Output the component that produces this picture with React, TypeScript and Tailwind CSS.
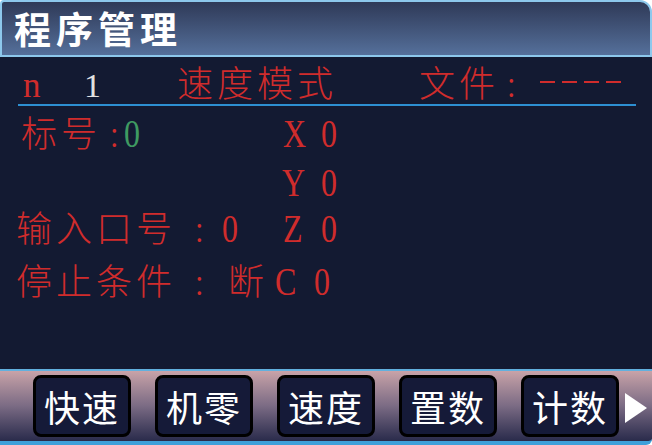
const cjk = "[font-family:'Noto_Sans_CJK_SC',sans-serif]"
const serif = "[font-family:'Liberation_Serif','Noto_Sans_CJK_SC',serif]"
const red = "text-[#d02c2c] font-light"
// narrow serif glyphs as on the LCD
const narrow = "inline-block origin-left scale-x-[0.82]"

const buttons = ["快速", "机零", "速度", "置数", "计数"]

export default function App() {
  return (
    <div className="flex h-[445px] w-[652px] flex-col overflow-hidden bg-white">
      <header className="flex h-[57px] shrink-0 items-center rounded-tl-[4px] rounded-tr-[12px] border-2 border-[#8dc8ec] bg-gradient-to-b from-[#2f3a58] to-[#55709b] pl-[12px]">
        <h1 className={`${cjk} text-[37px] font-bold leading-none tracking-[5px] text-white`}>程序管理</h1>
      </header>

      <main className="flex flex-1 flex-col bg-[#131a32]">
        <div className="mt-[6px] flex h-[38px] items-baseline leading-none">
          <span className={`${serif} ${red} ml-[23px] w-[61px] text-[35px]`}>n</span>
          <span className={`${serif} w-[93px] text-[34px] text-[#e2e2e2]`}>1</span>
          <span className={`${cjk} ${red} w-[242px] text-[36px] tracking-[4px]`}>速度模式</span>
          <span className={`${cjk} ${red} w-[88px] text-[36px] tracking-[4px]`}>文件</span>
          <span className={`${cjk} ${red} w-[33px] text-[34px]`}>:</span>
          <span className="flex gap-[7px] self-center">
            {[0, 1, 2, 3].map((i) => (
              <span key={i} className="h-[2px] w-[15px] bg-[#d02c2c]" />
            ))}
          </span>
        </div>
        <div className="mt-[3px] ml-[18px] h-[2px] w-[618px] bg-[#2d8fd2]" />

        <div className="mt-[7px] flex h-[36px] items-baseline leading-none">
          <span className={`${cjk} ${red} ml-[21px] w-[89px] text-[36px] tracking-[4px]`}>标号</span>
          <span className={`${cjk} ${red} w-[14px] text-[34px]`}>:</span>
          <span className={`${serif} w-[159px] text-[39px] text-[#3f9a62]`}><span className={narrow}>0</span></span>
          <span className={`${serif} ${red} w-[38px] text-[39px]`}><span className={narrow}>X</span></span>
          <span className={`${serif} ${red} text-[39px]`}><span className={narrow}>0</span></span>
        </div>

        <div className="mt-[14px] flex h-[36px] items-baseline leading-none">
          <span className={`${serif} ${red} ml-[282px] w-[39px] text-[39px]`}><span className={narrow}>Y</span></span>
          <span className={`${serif} ${red} text-[39px]`}><span className={narrow}>0</span></span>
        </div>

        <div className="mt-[9px] flex h-[36px] items-baseline leading-none">
          <span className={`${cjk} ${red} ml-[16px] w-[179px] text-[36px] tracking-[4px]`}>输入口号</span>
          <span className={`${cjk} ${red} w-[27px] text-[34px]`}>:</span>
          <span className={`${serif} ${red} w-[61px] text-[39px]`}><span className={narrow}>0</span></span>
          <span className={`${serif} ${red} w-[38px] text-[39px]`}><span className={narrow}>Z</span></span>
          <span className={`${serif} ${red} text-[39px]`}><span className={narrow}>0</span></span>
        </div>

        <div className="mt-[17px] flex h-[36px] items-baseline leading-none">
          <span className={`${cjk} ${red} ml-[16px] w-[179px] text-[36px] tracking-[4px]`}>停止条件</span>
          <span className={`${cjk} ${red} w-[33px] text-[34px]`}>:</span>
          <span className={`${cjk} ${red} w-[47px] text-[36px]`}>断</span>
          <span className={`${serif} ${red} w-[39px] text-[39px]`}><span className={narrow}>C</span></span>
          <span className={`${serif} ${red} text-[39px]`}><span className={narrow}>0</span></span>
        </div>
      </main>

      <footer className="flex h-[76px] shrink-0 items-start gap-[24px] rounded-br-[6px] border-t-2 border-b-4 border-t-[#62b0de] border-b-[#3ea0da] bg-gradient-to-b from-[#c9a3a8] via-[#7b6b84] to-[#2a2b4b] pt-[4px] pl-[33px]">
        {buttons.map((b) => (
          <div key={b} className={`${cjk} flex h-[62px] w-[98px] items-center justify-center rounded-[8px] border-[3px] border-black bg-[#151a38] text-[36px] leading-none tracking-[2px] text-white`}>
            {b}
          </div>
        ))}
        <svg viewBox="0 0 22 30" className="-ml-[18px] mt-[18px] h-[30px] w-[22px]">
          <polygon points="0,0 22,15 0,30" fill="#ffffff" />
        </svg>
      </footer>
    </div>
  )
}
